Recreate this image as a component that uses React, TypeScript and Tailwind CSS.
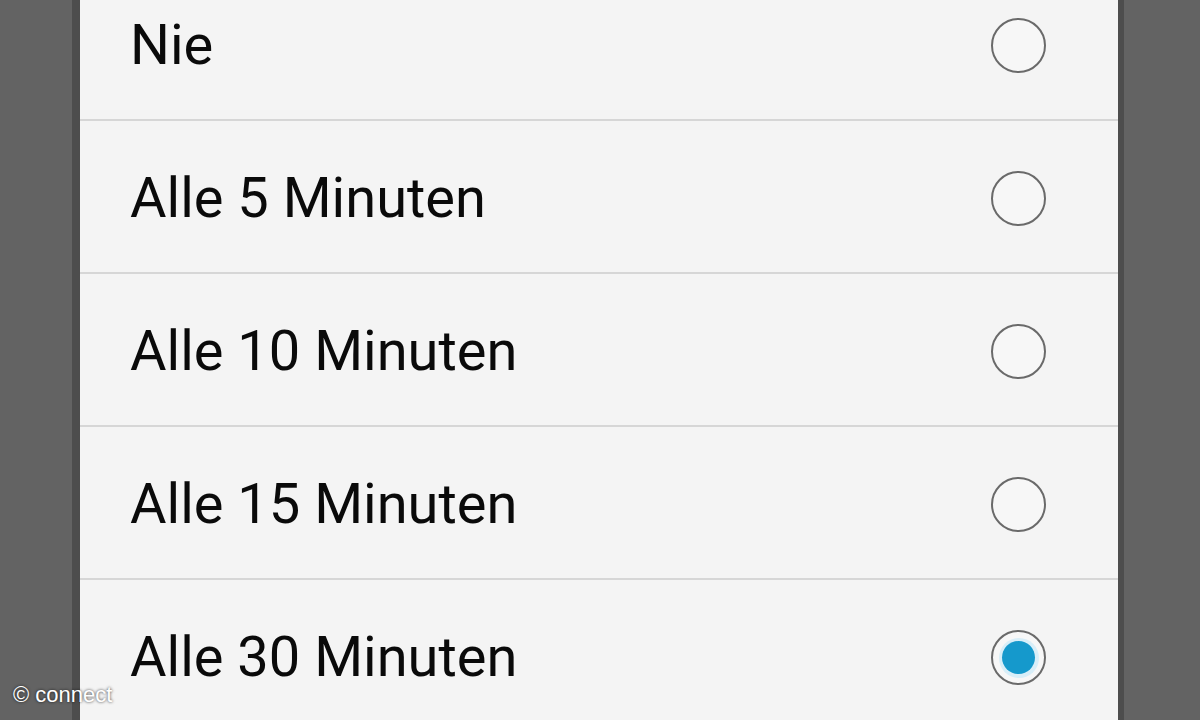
import React from "react";

const items = [
  { label: "Nie", selected: false },
  { label: "Alle 5 Minuten", selected: false },
  { label: "Alle 10 Minuten", selected: false },
  { label: "Alle 15 Minuten", selected: false },
  { label: "Alle 30 Minuten", selected: true },
];

function Radio({ selected }: { selected: boolean }) {
  return (
    <div className="mt-[4px] w-[55px] h-[55px] rounded-full border-[2.5px] border-[#6a6a6a] flex items-center justify-center bg-[#f7f7f7]">
      {selected && (
        <div className="w-[40px] h-[40px] rounded-full bg-[#d8eef8] flex items-center justify-center">
          <div className="w-[33px] h-[33px] rounded-full bg-[#1599cc]" />
        </div>
      )}
    </div>
  );
}

export default function App() {
  return (
    <div className="relative w-[1200px] h-[720px] overflow-hidden bg-[#636363] flex items-start justify-center">
      <div className="w-[8px] h-full bg-[#4d4d4d] ml-[72px]" />
      <div className="flex-1 h-[800px] bg-[#f4f4f4] flex flex-col mt-[-32px]">
        {items.map((it, i) => (
          <div key={it.label} className="flex flex-col shrink-0">
            <div className="h-[151px] flex items-center justify-between pl-[50px] pr-[72px]">
              <span
                className="mt-[2px] text-[56px] text-[#0a0a0a] leading-none"
                style={{ fontFamily: "Roboto, 'Noto Sans', sans-serif" }}
              >
                {it.label}
              </span>
              <Radio selected={it.selected} />
            </div>
            {i < items.length - 1 && <div className="h-[2px] bg-[#d6d6d6]" />}
          </div>
        ))}
      </div>
      <div className="w-[6px] h-full bg-[#4d4d4d] mr-[76px]" />
      <div
        className="absolute left-[13px] top-[684px] text-[22px] text-white leading-none [text-shadow:0_0_3px_rgba(0,0,0,0.8)]"
        style={{ fontFamily: "'Liberation Sans', Arial, sans-serif" }}
      >
        © connect
      </div>
    </div>
  );
}
